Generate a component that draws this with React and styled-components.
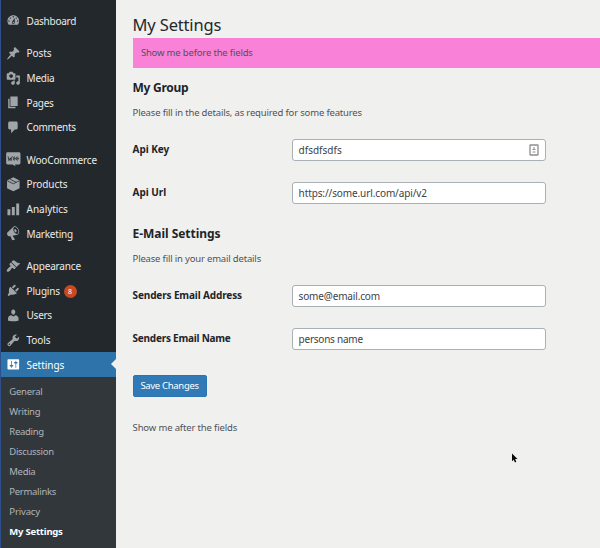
import React from 'react';
import styled, { createGlobalStyle } from 'styled-components';

const GlobalStyle = createGlobalStyle`
  * { box-sizing: border-box; }
  body {
    margin: 0;
    background: #f0f0ef;
    color: #505256;
    font: 9.5px/14px "Noto Sans", "Open Sans", sans-serif;
    overflow: hidden;
  }
  h1, h2, p, ul { margin: 0; padding: 0; }
`;

const Page = styled.div`
  display: flex;
  height: 548px;
  overflow: hidden;
  background: #f0f0ef;
`;

const Sidebar = styled.nav`
  flex: none;
  display: flex;
  flex-direction: column;
  width: 116.4px;
  background: #23282d;
  border-left: 1px solid #2d4f8b;
  padding-top: 8.4px;
`;

const MenuGroup = styled.div`
  margin-bottom: 7.9px;
  &:last-of-type { margin-bottom: 0; }
`;

const MenuItem = styled.div`
  position: relative;
  display: flex;
  align-items: center;
  height: 24.65px;
  padding-left: 5.3px;
  gap: 5.7px;
  font-size: 10px;
  color: ${({ $active }) => ($active ? '#fff' : '#eaebec')};
  background: ${({ $active }) => ($active ? '#2e73aa' : 'transparent')};
  svg {
    flex: none;
    width: 14.6px;
    height: 14.6px;
    fill: ${({ $active }) => ($active ? '#fff' : '#a0a5aa')};
  }
`;

const MenuArrow = styled.span`
  position: absolute;
  right: 0;
  top: 6.6px;
  border: 5.8px solid transparent;
  border-left: 0;
  border-right-color: #f0f0ef;
`;

const Label = styled.span`
  white-space: nowrap;
  letter-spacing: ${({ $track = 0 }) => $track}px;
`;

const Badge = styled.span`
  width: 13px;
  height: 13px;
  margin: 2px 0 0 -2px;
  border-radius: 50%;
  background: #ca4a1f;
  color: #fff;
  font-size: 7px;
  line-height: 13px;
  text-align: center;
`;

const Submenu = styled.ul`
  flex: 1;
  list-style: none;
  background: #32373c;
  padding: 5.4px 0 0 8.3px;
`;

const SubItem = styled.li`
  height: 20px;
  line-height: 20px;
  color: ${({ $current }) => ($current ? '#fff' : '#b1b5b9')};
  font-weight: ${({ $current }) => ($current ? 700 : 400)};
`;

const Content = styled.main`
  flex: 1;
  min-width: 0;
  padding: 12px 0 0 16.2px;
`;

const Title = styled.h1`
  height: 26px;
  font-size: 16.5px;
  font-weight: 400;
  line-height: 25px;
  color: #23282d;
`;

const Banner = styled.div`
  height: 30px;
  padding-left: 8.3px;
  line-height: 30px;
  background: #f982d8;
`;

const SectionTitle = styled.h2`
  margin-top: ${({ $gap }) => $gap}px;
  font-size: 12px;
  line-height: 18px;
  color: #202429;
`;

const Description = styled.p`
  margin-top: 9px;
  height: 14px;
`;

const Fields = styled.div`
  display: grid;
  gap: 21px;
  margin-top: 19px;
`;

const Field = styled.label`
  display: grid;
  grid-template-columns: 159px 254px;
  height: 22px;
`;

const FieldName = styled.span`
  color: #202429;
  font-size: 10px;
  font-weight: 700;
  line-height: 20px;
`;

const InputBox = styled.span`
  display: flex;
  align-items: center;
  justify-content: space-between;
  padding: 0 6px 0 6px;
  border: 1px solid #a9b0b6;
  border-radius: 3px;
  background: #fff;
  color: #3d4146;
  font-size: 10px;
`;

const SaveButton = styled.button`
  display: block;
  width: 74px;
  height: 22px;
  margin: 25px 0 24px;
  padding: 0;
  border: 1px solid #2b74ae;
  border-radius: 2px;
  background: #307ab8;
  color: #fff;
  font: 9.5px/18px "Noto Sans", "Open Sans", sans-serif;
`;

const Pointer = styled.svg`
  position: absolute;
  left: 511px;
  top: 453px;
  width: 7px;
  height: 10px;
`;

const icons = {
  dashboard: 'M3.76 16h12.48c1.1-1.37 1.76-3.11 1.76-5 0-4.42-3.58-8-8-8s-8 3.58-8 8c0 1.89.66 3.63 1.76 5zM10 4c.55 0 1 .45 1 1s-.45 1-1 1-1-.45-1-1 .45-1 1-1zM6 6c.55 0 1 .45 1 1s-.45 1-1 1-1-.45-1-1 .45-1 1-1zm8 0c.55 0 1 .45 1 1s-.45 1-1 1-1-.45-1-1 .45-1 1-1zm-5.37 5.55L12 7v6c0 1.1-.9 2-2 2s-2-.9-2-2c0-.57.24-1.08.63-1.45zM4 10c.55 0 1 .45 1 1s-.45 1-1 1-1-.45-1-1 .45-1 1-1zm12 0c.55 0 1 .45 1 1s-.45 1-1 1-1-.45-1-1 .45-1 1-1zm-5 3c0-.55-.45-1-1-1s-1 .45-1 1 .45 1 1 1 1-.45 1-1z',
  posts: 'M10.44 3.02l1.82-1.82 6.36 6.35-1.83 1.82c-1.05-.68-2.48-.57-3.41.36l-.75.75c-.92.93-1.04 2.35-.35 3.41l-1.83 1.82-2.41-2.41-2.8 2.79c-.42.42-3.38 2.71-3.8 2.29s1.86-3.39 2.28-3.81l2.79-2.79L4.1 9.36l1.83-1.82c1.05.69 2.48.57 3.4-.36l.75-.75c.93-.92 1.05-2.35.36-3.41z',
  media: 'M13 11V4c0-.55-.45-1-1-1h-1.67L9 1H5L3.67 3H2c-.55 0-1 .45-1 1v7c0 .55.45 1 1 1h10c.55 0 1-.45 1-1zM7 4.5c1.38 0 2.5 1.12 2.5 2.5S8.38 9.5 7 9.5 4.5 8.38 4.5 7 5.62 4.5 7 4.5zM14 6h5v10.5c0 1.38-1.12 2.5-2.5 2.5S14 17.88 14 16.5s1.12-2.5 2.5-2.5c.17 0 .34.02.5.05V9h-3V6zm-4 8.05V13h2v3.5c0 1.38-1.12 2.5-2.5 2.5S7 17.88 7 16.5 8.12 14 9.5 14c.17 0 .34.02.5.05z',
  pages: 'M6 15V2h10v13H6zm-1 1h8v2H3V5h2v11z',
  comments: 'M5 2h9c1.1 0 2 .9 2 2v7c0 1.1-.9 2-2 2h-2l-5 5v-5H5c-1.1 0-2-.9-2-2V4c0-1.1.9-2 2-2z',
  products: 'M10 .5l8.600 4.200v10.600L10 19.600l-8.600-4.300V4.700z',
  analytics: 'M18 18V2h-4v16h4zm-6 0V7H8v11h4zm-6 0v-8H2v8h4z',
  marketing: 'M18.15 5.94c.46 1.62.38 3.22-.02 4.48-.42 1.28-1.26 2.18-2.3 2.48-.16.06-.26.06-.4.06-.06.02-.12.02-.18.02-.06.02-.14.02-.22.02h-6.8l2.22 5.5c.02.14-.06.26-.14.34-.08.1-.24.16-.34.16H6.95c-.1 0-.26-.06-.34-.16-.08-.08-.16-.2-.14-.34l-1-5.5H4.25l-.02-.02c-.5.06-1.08-.18-1.54-.62s-.88-1.08-1.06-1.88c-.24-.8-.2-1.56-.02-2.2.18-.62.58-1.08 1.06-1.3l.02-.02 9-5.4c.1-.06.18-.1.24-.16.06-.04.14-.08.24-.12.16-.08.28-.12.5-.18 1.04-.3 2.24.1 3.22.98s1.84 2.24 2.26 3.86zm-2.58 5.98h-.02c.4-.1.74-.34 1.04-.7.58-.7.86-1.76.86-3.04 0-.64-.1-1.3-.28-1.98-.34-1.36-1.02-2.5-1.78-3.24s-1.68-1.1-2.46-.88c-.82.22-1.4.96-1.7 2-.32 1.04-.28 2.36.06 3.72.38 1.36 1 2.5 1.8 3.24.78.74 1.62 1.1 2.48.88zm-2.54-7.08c.22-.04.42-.02.62.04.38.16.76.48 1.02 1s.42 1.2.42 1.78c0 .3-.04.56-.12.8-.18.48-.44.84-.86.94-.34.1-.8-.06-1.14-.4s-.64-.86-.78-1.5c-.18-.62-.12-1.24.02-1.72s.48-.84.82-.94z',
  appearance: 'M14.48 11.06L7.41 3.99l1.5-1.5c.5-.56 2.3-.47 3.51.32 1.21.8 1.43 1.28 2.91 2.1 1.18.64 2.45 1.26 4.45.85zm-.71.71L6.7 4.7 4.93 6.47c-.39.39-.39 1.02 0 1.41l1.06 1.06c.39.39.39 1.03 0 1.42-.6.6-1.43 1.11-2.21 1.69-.35.26-.7.53-1.01.84C1.43 14.23.4 16.08 1.4 17.07c.99 1 2.84-.03 4.18-1.36.31-.31.58-.66.85-1.02.57-.78 1.08-1.61 1.69-2.21.39-.39 1.02-.39 1.41 0l1.06 1.06c.39.39 1.02.39 1.41 0z',
  plugins: 'M13.11 4.36L9.87 7.6 8 5.73l3.24-3.24c.35-.34 1.05-.2 1.56.32.52.51.66 1.21.31 1.55zm-8 1.77l.91-1.12 9.01 9.01-1.19.84c-.71.71-2.63 1.16-3.82 1.16H6.14L4.9 17.26c-.59.59-1.54.59-2.12 0-.59-.58-.59-1.53 0-2.12l1.24-1.24v-3.88c0-1.13.4-3.19 1.09-3.89zm7.26 3.97l3.24-3.24c.34-.35 1.04-.21 1.55.31.52.51.66 1.21.31 1.55l-3.24 3.25z',
  users: 'M10 9.25c-2.27 0-2.73-3.44-2.73-3.44C7 4.02 7.82 2 9.97 2c2.16 0 2.98 2.02 2.71 3.81 0 0-.41 3.44-2.68 3.44zm0 2.57L12.72 10c2.39 0 4.52 2.33 4.52 4.53v2.49s-3.65 1.13-7.24 1.13c-3.65 0-7.24-1.13-7.24-1.13v-2.49c0-2.25 1.94-4.48 4.47-4.48z',
  tools: 'M16.68 9.77c-1.34 1.34-3.3 1.67-4.95.99l-5.41 6.52c-.99.99-2.59.99-3.58 0s-.99-2.59 0-3.57l6.52-5.42c-.68-1.65-.35-3.61.99-4.95 1.28-1.28 3.12-1.62 4.72-1.06l-2.89 2.89 2.82 2.82 2.86-2.87c.53 1.58.18 3.39-1.08 4.65zM3.81 16.21c.4.39 1.04.39 1.43 0 .4-.4.4-1.04 0-1.43-.39-.4-1.03-.4-1.43 0-.39.39-.39 1.03 0 1.43z',
  settings: 'M18 16V4c0-.55-.45-1-1-1H3c-.55 0-1 .45-1 1v12c0 .55.45 1 1 1h14c.55 0 1-.45 1-1zM8 11h1c.55 0 1 .45 1 1s-.45 1-1 1H8v1.5c0 .28-.22.5-.5.5s-.5-.22-.5-.5V13H6c-.55 0-1-.45-1-1s.45-1 1-1h1V5.500c0-.28.22-.5.5-.5s.5.22.5.5V11zm5-2h-1c-.55 0-1-.45-1-1s.45-1 1-1h1V5.500c0-.28.22-.5.5-.5s.5.22.5.5V7h1c.55 0 1 .45 1 1s-.45 1-1 1h-1v5.500c0 .28-.22.5-.5.5s-.5-.22-.5-.5V9z',
};

function WooIcon() {
  return (
    <svg viewBox="0 0 20 20">
      <path d="M2.200 .5h15.600a2 2 0 0 1 2 2v12.500a2 2 0 0 1-2 2h-5.600l1 2.700-4.400-2.700H2.200a2 2 0 0 1-2-2V2.500a2 2 0 0 1 2-2z" />
      <g fill="none" stroke="#23282d" strokeWidth="1.100" strokeLinejoin="round" strokeLinecap="round">
        <path d="M3 6.500l1 5.300 1.900-3.800 1 3.800q.3-3.600 1.600-5.500" />
        <ellipse cx="11.200" cy="9" rx="1.200" ry="2.400" />
        <ellipse cx="15.400" cy="9" rx="1.200" ry="2.400" />
      </g>
    </svg>
  );
}

function MenuIcon({ name }) {
  if (name === 'woo') return <WooIcon />;
  return (
    <svg viewBox="0 0 20 20">
      <path
        d={icons[name]}
        transform={name === 'marketing' ? 'rotate(-12 10 10)' : undefined}
      />
      {name === 'products' && (
        <path d="M1.800 5.200L10 9.300l8.200-4.100M5.800 3.200l8.200 4.100" fill="none" stroke="#23282d" strokeWidth="1.100" />
      )}
    </svg>
  );
}

const menu = [
  [['dashboard', 'Dashboard', -0.24]],
  [['posts', 'Posts', -0.1], ['media', 'Media', -0.24], ['pages', 'Pages', -0.25], ['comments', 'Comments', -0.25]],
  [['woo', 'WooCommerce', -0.18], ['products', 'Products', -0.1], ['analytics', 'Analytics', -0.04], ['marketing', 'Marketing', -0.22]],
  [['appearance', 'Appearance', -0.18], ['plugins', 'Plugins', -0.17, 8], ['users', 'Users', -0.27], ['tools', 'Tools', -0.08], ['settings', 'Settings', -0.05]],
];

const submenu = [
  ['General', -0.25], ['Writing', -0.24], ['Reading', -0.3], ['Discussion', -0.31],
  ['Media', -0.3], ['Permalinks', -0.29], ['Privacy', -0.14], ['My Settings', -0.22],
];

function FormField({ name, nameTrack, value, valueTrack, children }) {
  return (
    <Field>
      <FieldName><Label $track={nameTrack}>{name}</Label></FieldName>
      <InputBox><Label $track={valueTrack}>{value}</Label>{children}</InputBox>
    </Field>
  );
}

function AutofillIcon() {
  return (
    <svg width="10" height="12" viewBox="0 0 10 12" fill="none" stroke="#8b8d8f">
      <rect x="1" y="1" width="8" height="10" rx=".5" strokeWidth="1.300" />
      <path d="M5 3v2.500M3.500 5.500h3M3.500 8h3" />
    </svg>
  );
}

export default function App() {
  return (
    <Page>
      <GlobalStyle />
      <Sidebar>
        {menu.map((group, i) => (
          <MenuGroup key={i}>
            {group.map(([icon, name, track, count]) => (
              <MenuItem key={name} $active={icon === 'settings'}>
                <MenuIcon name={icon} />
                <Label $track={track}>{name}</Label>
                {count && <Badge>{count}</Badge>}
                {icon === 'settings' && <MenuArrow />}
              </MenuItem>
            ))}
          </MenuGroup>
        ))}
        <Submenu>
          {submenu.map(([name, track]) => (
            <SubItem key={name} $current={name === 'My Settings'}>
              <Label $track={track}>{name}</Label>
            </SubItem>
          ))}
        </Submenu>
      </Sidebar>
      <Content>
        <Title><Label $track={-0.17}>My Settings</Label></Title>
        <Banner><Label $track={-0.17}>Show me before the fields</Label></Banner>
        <SectionTitle $gap={11}><Label $track={-0.27}>My Group</Label></SectionTitle>
        <Description><Label $track={-0.17}>Please fill in the details, as required for some features</Label></Description>
        <Fields>
          <FormField name="Api Key" nameTrack={-0.07} value="dfsdfsdfs" valueTrack={0}><AutofillIcon /></FormField>
          <FormField name="Api Url" nameTrack={-0.04} value="https://some.url.com/api/v2" valueTrack={-0.11} />
        </Fields>
        <SectionTitle $gap={21}><Label $track={-0.04}>E-Mail Settings</Label></SectionTitle>
        <Description><Label $track={-0.18}>Please fill in your email details</Label></Description>
        <Fields>
          <FormField name="Senders Email Address" nameTrack={-0.13} value="some@email.com" valueTrack={-0.15} />
          <FormField name="Senders Email Name" nameTrack={-0.23} value="persons name" valueTrack={-0.24} />
        </Fields>
        <SaveButton><Label $track={-0.31}>Save Changes</Label></SaveButton>
        <p><Label $track={-0.15}>Show me after the fields</Label></p>
      </Content>
      <Pointer viewBox="0 0 7 10">
        <path d="M1 .5v7.700l1.700-1.500L4 9.400l1.300-.6L4.100 6.100h2.400z" fill="#080808" />
      </Pointer>
    </Page>
  );
}
